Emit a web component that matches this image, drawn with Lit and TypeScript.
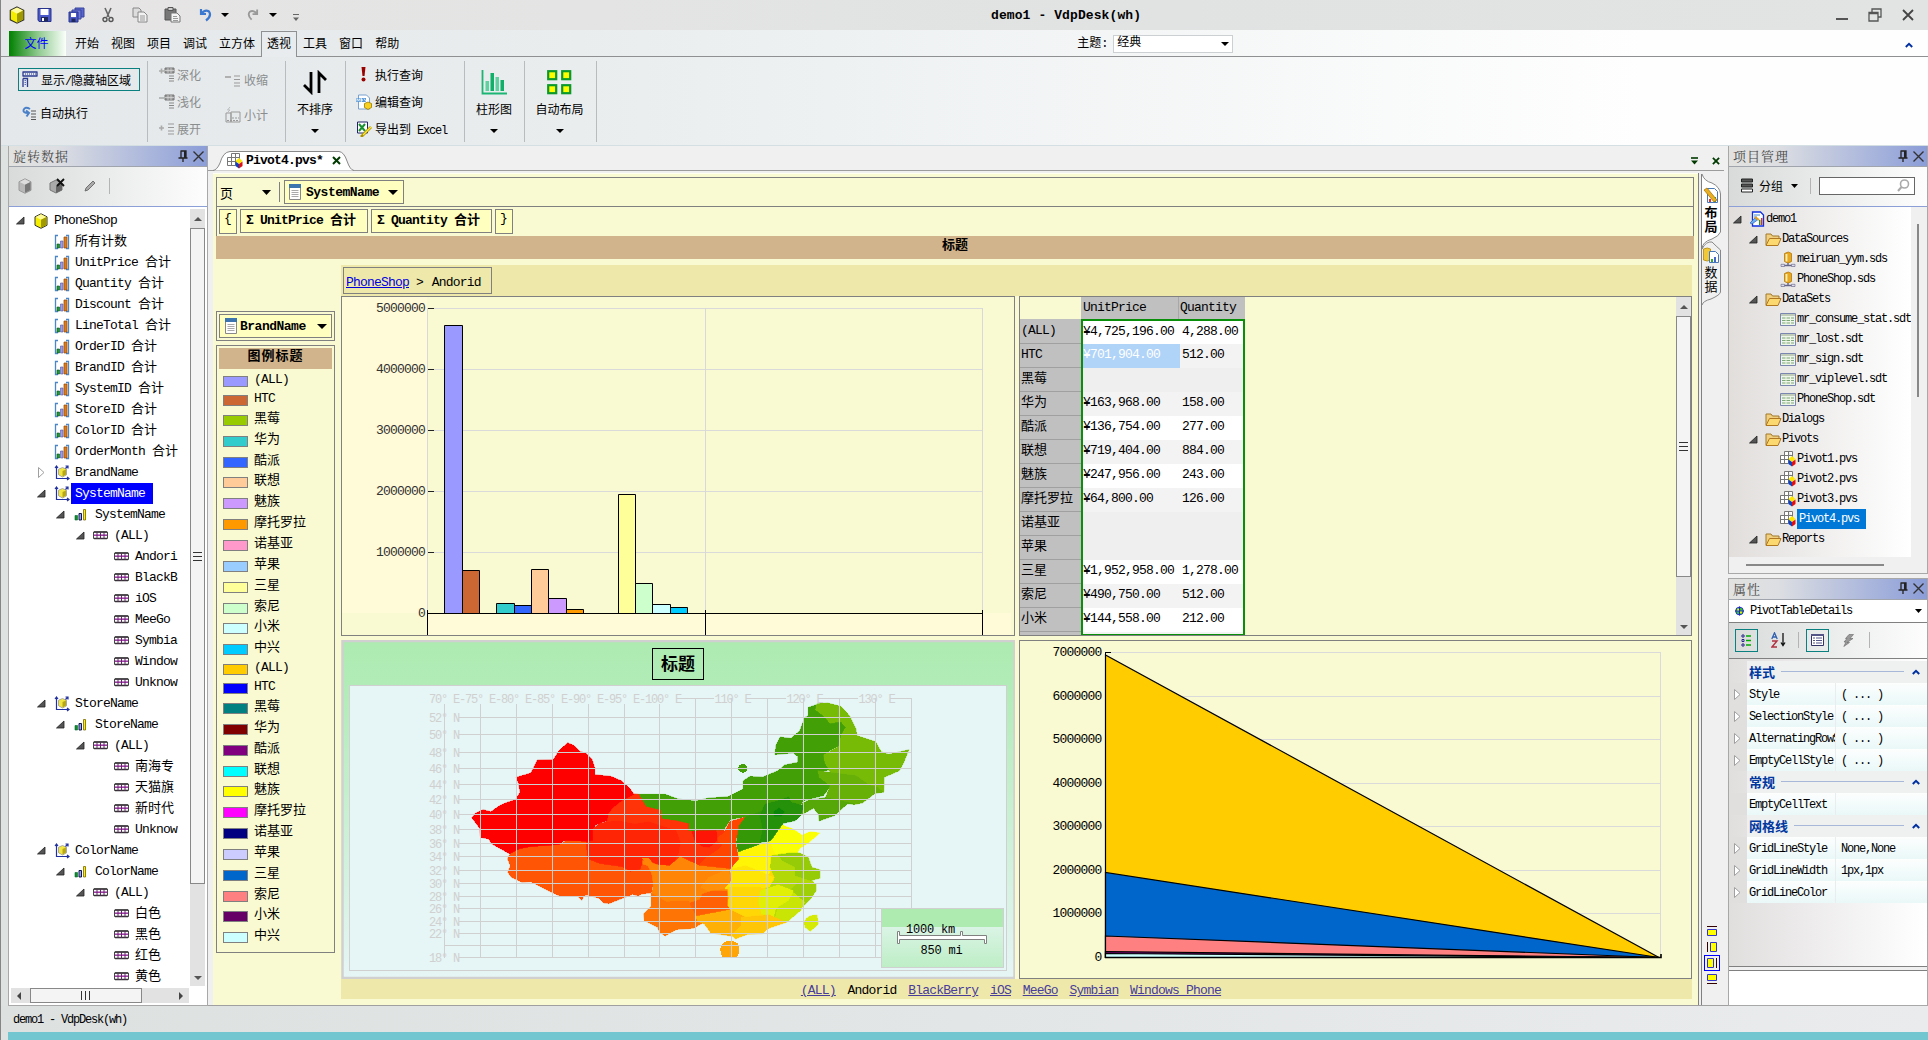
import { LitElement, html, svg, css, nothing } from "lit";
import { customElement } from "lit/decorators.js";
import { classMap } from "lit/directives/class-map.js";

/* Latin runs are tightened so that two Latin letters take one ideograph. */
const tx = (s: string) =>
  html`<span>${s.split(/([\x20-\x7e¥Σ°]+)/).filter((p) => p).map((p) =>
    /^[\x20-\x7e¥Σ°]/.test(p) ? html`<span class="l">${p}</span>` : p)}</span>`;

const base = css`
  :host { display: block; box-sizing: border-box; }
  *, *::before, *::after { box-sizing: border-box; }
  .l { letter-spacing: -0.1em; white-space: pre; }
  .f13 .l { letter-spacing: -0.0615em; }
  .b { font-weight: bold; }
  svg { display: block; flex: none; }
  .row { display: flex; align-items: center; }
  .sp { flex: 1; }
  .phead { height: 21px; display: flex; align-items: center; padding: 0 2px 0 4px; border-bottom: 1px solid #a0a4ac;
    background: linear-gradient(90deg, #e2e2e0 0%, #dcdee2 25%, #8b9dd8 100%); color: #444; }
  .phead .t { font: 13px/20px "Noto Serif CJK SC", "Liberation Serif", "Noto Sans CJK SC", serif; letter-spacing: 1px; color: #4a4a4a; flex: 1; }
  .ptool { height: 40px; display: flex; align-items: center; border-bottom: 1px solid #8c9fd6; padding-bottom: 2px;
    background: linear-gradient(90deg, #d8dbda, #fdfdfd); }
  .vsep { width: 1px; height: 16px; background: #b4b4b4; }
`;

const tri = (w = 8, h = 4, c = "#000") => html`<svg width=${w} height=${h} viewBox="0 0 8 4" preserveAspectRatio="none"><path d="M0 0h8L4 4z" fill=${c} /></svg>`;
const open = html`<svg width="9" height="9" viewBox="0 0 9 9"><path d="M8 1v7H.5z" fill="#555" stroke="#222" stroke-width=".8" /></svg>`;
const closed = html`<svg width="9" height="13" viewBox="0 0 9 13"><path d="M1.500 1.500v10l5.500-5z" fill="#fff" stroke="#a0a0a0" /></svg>`;
const pin = html`<svg width="12" height="13" viewBox="0 0 12 13"><path d="M3.500 1h5.500v6.500M4 1v6.500M1.500 8h9M6 8v4" fill="none" stroke="#222" stroke-width="1.300" /><path d="M7 1h2v7H7z" fill="#222" /></svg>`;
const cross = html`<svg width="13" height="13" viewBox="0 0 13 13"><path d="M1.500 1.500l10 10M11.500 1.500l-10 10" stroke="#333" stroke-width="1.400" /></svg>`;
const cube = (w = 16, top = "#fffb9a", l = "#f5ee00", r = "#a09a00", s = "#333") => html`<svg width=${w} height=${w} viewBox="0 0 16 16">
  <path d="M8 .8l6 3v8.500l-6 3-6-3V3.800z" fill=${l} stroke=${s} /><path d="M8 1.300l5.300 2.600L8 6.800 2.700 3.900z" fill=${top} /><path d="M8 6.800l5.500-2.900v8.100L8 14.800z" fill=${r} /></svg>`;
const measure = html`<svg width="16" height="16" viewBox="0 0 16 16"><path d="M4 1.500H1.500v13H4M12 1.500h2.500v13H12" fill="none" stroke="#4a86c8" stroke-width="1.300" />
  <path d="M3 10h2.500v4H3z" fill="#18a030" stroke="#085018" stroke-width=".6" /><path d="M6.500 7H9v7H6.500z" fill="#9a9af0" stroke="#5050a0" stroke-width=".6" /><path d="M10 3h3v11h-3z" fill="#e07c18" stroke="#904808" stroke-width=".7" /></svg>`;
const dimension = html`<svg width="16" height="16" viewBox="0 0 16 16"><path d="M2.500 1v12.500H15M1 3l1.500-2L4 3M13 12l2 1.500-2 1.500M11 4l3-3m-2.500 0H14v2.500" fill="none" stroke="#2030a0" stroke-width="1.200" />
  <path d="M8.500 2.500l4 1.800v5.500L8.500 12 4.500 9.700v-5.500z" fill="#f2e640" stroke="#999" stroke-width=".8" /><path d="M8.500 6v5.500L12 9.500V4.500z" fill="#b8a818" /></svg>`;
const level = html`<svg width="13" height="13" viewBox="0 0 13 13"><path d="M1 7.500h2.500V12H1z" fill="#109020" stroke="#063" stroke-width=".6" /><path d="M5 5.500h2.500V12H5z" fill="#8fa0ff" stroke="#003" stroke-width=".9" /><path d="M9.500 1.500h2V12h-2z" fill="#ffee00" stroke="#776600" stroke-width=".8" /></svg>`;
const member = html`<svg width="15" height="9" viewBox="0 0 15 9"><path d="M.5 1h14v6.500H.5z" fill="#fff" stroke="#444" /><path d="M1 1h13M1 7.500h13" stroke="#333" stroke-width="1.600" /><path d="M1 4.200h13" stroke="#a030a8" stroke-width="1.500" /><path d="M4 1v7M7.500 1v7M11 1v7" stroke="#5a2a60" /></svg>`;
const pivotIc = html`<svg width="16" height="16" viewBox="0 0 16 16"><path d="M4.500 .5h8v8h-8zM.5 4.500h8v8h-8zM8.500 .5v4h4M4.500 4.500v8M.5 8.500h8" fill="#fff" stroke="#777" />
  <path d="M12 5l3.500 3L12 11 8.500 8z" fill="#ffe800" /><path d="M8.500 8.500L12 11v4.500l-3.500-2.500z" fill="#1040c0" /><path d="M15.500 8.500L12 11v4.500l3.500-2.500z" fill="#e01010" /></svg>`;
const folder = html`<svg width="17" height="15" viewBox="0 0 17 15"><path d="M1 13V2h5l1.500 2H14v3" fill="#f0d080" stroke="#a07828" /><path d="M1 13.500L4.500 6.500H16L13 13.500z" fill="#fbd870" stroke="#b07820" /></svg>`;
const dsIc = html`<svg width="16" height="16" viewBox="0 0 16 16"><path d="M4.500 2.500q4-3 7 0v8q-3.500 3-7 0z" fill="#e8a820" stroke="#b07810" stroke-width=".8" /><path d="M6.500 3v7.500" stroke="#fff0b0" stroke-width="1.800" /><path d="M8 12v2M1 14.500h14" stroke="#668" stroke-width="1.400" /><path d="M1 13.300h3.500v2.200H1zM11.500 13.300H15v2.200h-3.500z" fill="#dde" stroke="#668" stroke-width=".6" /></svg>`;
const sdtIc = html`<svg width="16" height="13" viewBox="0 0 16 13"><path d="M.5.5h15v12H.5z" fill="#eef6ea" stroke="#7a86b0" /><path d="M1 2h14" stroke="#c0ccb8" stroke-width="2" /><path d="M2 5h3.500M6.500 5H10M11 5h3M2 7.500h3.500M6.500 7.500H10M11 7.500h3M2 10h3.500M6.500 10H10M11 10h3" stroke="#7ea878" /></svg>`;
const projIc = html`<svg width="16" height="16" viewBox="0 0 16 16"><path d="M3.500 1h8l3 3v11h-11z" fill="#fff" stroke="#1030e0" stroke-width="1.300" /><path d="M5 4h6M5 6h3" stroke="#48c" /><path d="M10 9h1.500v5H10z" fill="#1a9a30" /><path d="M12 7h1.500v7H12z" fill="#e03020" /><path d="M1 12l5-5 2.500 2L3 13z" fill="#6ab0f0" stroke="#3060c0" stroke-width=".7" /><path d="M6 6l4 3" stroke="#e8a010" stroke-width="2" /></svg>`;
const listIc = html`<svg width="12" height="16" viewBox="0 0 12 16"><path d="M.5.5h11v15H.5z" fill="#fff" stroke="#888" /><path d="M0 0h12v4H0z" fill="#3c74b0" /><path d="M2.500 6.500h7M2.500 8.500h7M2.500 10.500h7M2.500 12.500h7" stroke="#aaa" /></svg>`;

@customElement("ribbon-bar")
class RibbonBar extends LitElement {
  static styles = [base, css`
    :host { height: 146px; background: linear-gradient(90deg, #e4e8ea 0%, #e9edee 30%, #fefefe 85%); border-bottom: 1px solid #d4dfe4; }
    .title { height: 30px; background: linear-gradient(90deg, #e7e5e5, #e0e3e2 60%, #e2e4e4); padding: 0 9px 0 7px; display: grid; grid-template-columns: 983px 1fr auto; align-items: center; }
    .title .name { font-size: 13px; color: #000; }
    .title .name .l { letter-spacing: 0.1px; font-weight: bold; }
    .quick { display: flex; align-items: center; }
    .winb { display: flex; justify-content: flex-end; align-items: center; gap: 20px; padding-right: 5px; }
    .tabs { height: 27px; padding-left: 8px; display: flex; border-bottom: 1px solid #8e9092; line-height: 30px; }
    .file { width: 57px; margin-top: 1px; color: #00f; text-align: center; background: linear-gradient(90deg, #008000, #8cc88c 50%, #fafffa); line-height: 28px; padding-right: 2px; }
    .tab { padding: 0 6px; margin-left: 0; }
    .tab.first { margin-left: 3px; }
    .tab.on { border: 1px solid #8e9092; border-bottom: 0; margin-top: 1px; height: 26px; padding: 0 5px; line-height: 27px; background: #e9ecee; }
    .theme { display: flex; align-items: center; margin-left: 672px; gap: 6px; margin-top: 1px; }
    .combo { width: 120px; height: 18px; background: #fff; border: 1px solid #ccd0d2; display: flex; align-items: center; justify-content: space-between; padding: 0 3px; line-height: 17px; }
    .chev { margin-left: auto; margin-right: 15px; align-self: center; margin-top: 3px; }
    .groups { display: flex; height: 88px; padding: 4px 0 4px 7px; }
    .g { border-right: 1px solid #b9bcbe; height: 81px; }
    .g1 { width: 140px; padding: 7px 8px 0 10px; }
    .toggle { border: 1px solid #0b8080; height: 23px; width: 122px; padding-left: 3px; gap: 3px; white-space: nowrap; }
    .plain { height: 22px; margin-top: 11px; padding-left: 4px; gap: 3px; }
    .g2 { width: 138px; display: flex; padding-left: 11px; color: #8a8d8e; }
    .col3 { width: 66px; }
    .col3 .row { height: 27px; gap: 2px; }
    .col2 { padding-top: 1px; }
    .col2 .row { height: 35px; gap: 3px; }
    .big { display: flex; flex-direction: column; align-items: center; padding-right: 1px; }
    .big svg.ic { margin-top: 9px; height: 25px; }
    .big .cap { margin: 8px 0 9px; line-height: 17px; }
    .g3 { width: 60px; } .g4 { width: 119px; padding-left: 10px; } .g5 { width: 60px; } .g6 { width: 72px; padding-right: 2px; }
    .g4 .row { height: 27px; gap: 3px; }
  `];
  render() {
    const grid3 = svg`<path d="M6 1h9v5H6z" fill="#999" stroke="#777"/><path d="M6 3.500h9M9 1v5M12 1v5" stroke="#ddd" stroke-width=".7"/><path d="M10 9h5M10 11.500h5M10 14h5" stroke="#888"/>`;
    const dots = svg`<path d="M9 3h6M9 6.500h6M9 10h6M9 13h6" stroke="#999"/>`;
    return html`
      <div class="title">
        <div class="quick">
          ${cube(18)}
          <svg width="15" height="16" viewBox="0 0 15 16" style="margin-left:11px"><path d="M1 1.500h13v13H2L1 13z" fill="#4a58c8" stroke="#28348c" /><path d="M3.500 2h8v6h-8z" fill="#fff" /><path d="M4 10h7v4.500H4z" fill="#20285c" /><path d="M5 11h2v3H5z" fill="#fff" /></svg>
          <svg width="17" height="16" viewBox="0 0 17 16" style="margin-left:16px"><path d="M7 1h9v9H7z" fill="#5a66cc" stroke="#38449c" /><path d="M4 3h9v9H4z" fill="#6f7ada" stroke="#38449c" /><path d="M1 5h9v10H1z" fill="#4a58c8" stroke="#28348c" /><path d="M3 6h5v4H3z" fill="#fff" /><path d="M3.500 11.500h4V15h-4z" fill="#20285c" /></svg>
          <svg width="12" height="16" viewBox="0 0 12 16" style="margin-left:17px"><path d="M3 1l4 9M9 1L5 10" stroke="#666" stroke-width="1.600" /><circle cx="3" cy="12.500" r="2" fill="none" stroke="#555" stroke-width="1.400" /><circle cx="9" cy="12.500" r="2" fill="none" stroke="#555" stroke-width="1.400" /></svg>
          <svg width="16" height="16" viewBox="0 0 16 16" style="margin-left:18px"><path d="M1 1h6l2 2v7H1z" fill="#ddd" stroke="#888" /><path d="M6 5h6l3 3v7H6z" fill="#f2f2f2" stroke="#888" /><path d="M8 9h5M8 11h5M8 13h5" stroke="#999" /></svg>
          <svg width="17" height="16" viewBox="0 0 17 16" style="margin-left:16px"><path d="M1 2h11v11H1z" fill="#777" stroke="#555" /><path d="M4 .5h5v3H4z" fill="#ccc" stroke="#555" /><path d="M7 6h6l3 3v6H7z" fill="#f4f4f4" stroke="#777" /><path d="M9 9.500h4M9 11.500h5M9 13.500h5" stroke="#999" /></svg>
          <svg width="13" height="14" viewBox="0 0 13 14" style="margin-left:18px"><path d="M2 1v5h5M2 6Q6 1 10 3.500 13 8 7 12.500" fill="none" stroke="#3b78d0" stroke-width="2.200" /></svg>
          <span style="margin-left:9px">${tri(8, 4)}</span>
          <svg width="12" height="14" viewBox="0 0 13 14" style="margin-left:18px"><path d="M11 1v5H6M11 6Q7 1 3 3.500 0 7 5 12" fill="none" stroke="#999" stroke-width="2" /></svg>
          <span style="margin-left:10px">${tri(8, 4)}</span>
          <svg width="8" height="9" viewBox="0 0 8 9" style="margin:4px 0 0 15px"><path d="M1 1.500h6" stroke="#666" /><path d="M1 4.500h6L4 8z" fill="#666" /></svg>
        </div>
        <div class="name">${tx("demo1 — VdpDesk(wh)".replace("—", "-"))}</div>
        <div class="winb">
          <svg width="12" height="14" viewBox="0 0 12 14"><path d="M0 11h12" stroke="#555" stroke-width="2" /></svg>
          <svg width="14" height="14" viewBox="0 0 14 14"><path d="M4 4V1h9v8h-3M1 4.500h9V13H1zM1 5.500h9" fill="none" stroke="#555" stroke-width="1.300" /></svg>
          <svg width="12" height="12" viewBox="0 0 12 12"><path d="M1 1l10 10M11 1L1 11" stroke="#444" stroke-width="1.800" /></svg>
        </div>
      </div>
      <div class="tabs">
        <div class="file">文件</div>
        ${["开始", "视图", "项目", "调试", "立方体", "透视", "工具", "窗口", "帮助"].map((t, i) => html`<div class=${classMap({ tab: true, first: i === 0, on: t === "透视" })}>${t}</div>`)}
        <div class="theme">${tx("主题:")}<div class="combo">经典${tri(8, 4)}</div></div>
        <svg class="chev" width="8" height="6" viewBox="0 0 8 6"><path d="M.8 5L4 1.800 7.200 5" fill="none" stroke="#0030a0" stroke-width="1.900" /></svg>
      </div>
      <div class="groups">
        <div class="g g1">
          <div class="row toggle"><svg width="16" height="17" viewBox="0 0 16 17"><path d="M.5 1h15M.5 5h15M1 1v4M15 1v4M1 7.500h4.500V16M1 7.500V16" fill="none" stroke="#2a3a90" stroke-width="1.300" /><path d="M3 3h11" stroke="#2a3a90" stroke-dasharray="1 1" /><path d="M3.200 9v6" stroke="#2a3a90" stroke-dasharray="1 1" /></svg>${tx("显示/隐藏轴区域")}</div>
          <div class="row plain"><svg width="15" height="14" viewBox="0 0 15 14"><path d="M8 3Q3 0 1.500 4 1 7 6 7M4 4.500L7 7 4.500 10.500" fill="none" stroke="#4a80c8" stroke-width="2" /><path d="M9 5h5M9 8h5M9 11h5M9 13.500h5" stroke="#555" stroke-width="1.200" /></svg>自动执行</div>
        </div>
        <div class="g g2">
          <div class="col3">
            <div class="row"><svg width="16" height="16" viewBox="0 0 16 16"><path d="M0 4h5M2.500 1.500v5" stroke="#aaa" stroke-width="1.600" />${grid3}</svg>深化</div>
            <div class="row"><svg width="16" height="16" viewBox="0 0 16 16"><path d="M0 4h5" stroke="#aaa" stroke-width="1.600" />${grid3}</svg>浅化</div>
            <div class="row"><svg width="16" height="16" viewBox="0 0 16 16"><path d="M0 7h5M2.500 4.500v5" stroke="#aaa" stroke-width="1.600" />${dots}</svg>展开</div>
          </div>
          <div class="col2">
            <div class="row"><svg width="16" height="16" viewBox="0 0 16 16"><path d="M0 5h6" stroke="#aaa" stroke-width="1.800" /><g transform="translate(0 1)">${dots}</g></svg>收缩</div>
            <div class="row"><svg width="16" height="16" viewBox="0 0 16 16"><path d="M1 6h5v9H1zM6 5h9v10H6z" fill="none" stroke="#999" /><path d="M2 13.500h12M7 11h7" stroke="#999" stroke-dasharray="2 1" /><path d="M5 0L2.500 3H5L2 6" fill="none" stroke="#bbb" /></svg>小计</div>
          </div>
        </div>
        <div class="g g3 big"><svg class="ic" width="26" height="25" viewBox="0 0 26 25"><path d="M9 2v20L2 15M17 23V3l7 7" fill="none" stroke="#000" stroke-width="2.800" /></svg><span class="cap">不排序</span>${tri(8, 4)}</div>
        <div class="g g4">
          <div class="row"><svg width="16" height="15" viewBox="0 0 16 15"><path d="M5.500 0h4L8.500 9h-2z" fill="#900" /><circle cx="7.500" cy="12.500" r="2" fill="#900" /></svg>执行查询</div>
          <div class="row"><svg width="16" height="16" viewBox="0 0 16 16"><path d="M2.500 1h8l3 3v11h-11z" fill="#fff" stroke="#78a0d0" /><path d="M0 4h10v4H0z" fill="#5a9ad8" /><path d="M1 7.500v-3l1.500 2L4 4.500v3M5.500 4.500v3q2-1 0-3M8 4.500l2 3" fill="none" stroke="#fff" stroke-width=".8" /><path d="M12 8l3.500 1.500v4L12 15.500 8.500 13.500v-4z" fill="#f8d020" stroke="#9a7a00" stroke-width=".8" /></svg>编辑查询</div>
          <div class="row"><svg width="16" height="16" viewBox="0 0 16 16"><path d="M1.500 1h10v11h-10z" fill="#fff" stroke="#226" /><path d="M3 3l6 7M9 3l-6 7" stroke="#1a9030" stroke-width="2" /><path d="M15 6L7 14l-2 2" stroke="#a89000" stroke-width="2.600" /><path d="M15 6L7 14" stroke="#ffe830" stroke-width="1.200" /></svg>${tx("导出到 Excel")}</div>
        </div>
        <div class="g g5 big"><svg class="ic" width="26" height="25" viewBox="0 0 26 25"><path d="M1.500 0v23.500H26" fill="none" stroke="#1db573" stroke-width="1.800" /><path d="M4.500 11h3.500v10H4.500zM14.500 7h3.500v14h-3.500z" fill="#5fd0a0" /><path d="M9.500 3h3.500v18H9.500zM19.500 10h3.500v11h-3.500z" fill="#10b068" /></svg><span class="cap">柱形图</span>${tri(8, 4)}</div>
        <div class="g g6 big"><svg class="ic" width="25" height="25" viewBox="0 0 25 25">${[[0, 0], [14, 0], [0, 14], [14, 14]].map(([x, y]) => svg`<rect x=${x + 1.200} y=${y + 1.200} width="8" height="8" fill="#ff0" stroke="#0a9a2a" stroke-width="2.200"/>`)}</svg><span class="cap">自动布局</span>${tri(8, 4)}</div>
      </div>`;
  }
}

type Node = [number, unknown, string, ("o" | "c" | "")?, boolean?];

@customElement("cube-panel")
class CubePanel extends LitElement {
  static styles = [base, css`
    :host { width: 200px; height: 860px; border: 1px solid #a8a8a8; border-top: 0; background: #fff; margin-bottom: 0; }
    .ptool { padding-left: 8px; gap: 16px; }
    .body { display: flex; height: 779px; }
    .tree { width: 181px; padding-top: 3px; font-size: 13px; line-height: 20px; overflow: hidden; }
    .n { height: 21px; display: flex; align-items: center; position: relative; }
    .arr { width: 13px; flex: none; display: flex; justify-content: flex-start; }
    .ic { width: 21px; flex: none; display: flex; align-items: center; }
    .n.top .ic { width: 17px; }
    .lbl { padding: 0 0 0 4px; margin-left: -4px; white-space: nowrap; height: 21px; line-height: 22px; }
    .n.top .lbl { margin-left: 0; }
    .sel { background: #00f; color: #fff; padding-right: 8px; }
    .vs { width: 15px; margin-top: 2px; height: 777px; background: #e2e2e2; display: flex; flex-direction: column; align-items: center; }
    .up { height: 19px; display: flex; align-items: center; }
    .th { width: 15px; height: 656px; background: #f4f4f4; border: 1px solid #888; display: flex; align-items: center; justify-content: center; }
    .dn { flex: 1; display: flex; align-items: flex-end; padding-bottom: 6px; }
    .hs { width: 178px; margin: 2px 0 0 2px; height: 15px; background: #e2e2e2; display: flex; align-items: center; justify-content: space-between; padding: 0 6px; }
    .hs .th2 { width: 112px; height: 15px; background: #f4f4f4; border: 1px solid #888; display: flex; align-items: center; justify-content: center; margin-right: 27px; margin-left: -2px; }
  `];
  nodes: Node[] = [
    [0, cube(16), "PhoneShop", "o"],
    ...["所有计数", "UnitPrice 合计", "Quantity 合计", "Discount 合计", "LineTotal 合计", "OrderID 合计", "BrandID 合计", "SystemID 合计", "StoreID 合计", "ColorID 合计", "OrderMonth 合计"].map((s) => [1, measure, s] as Node),
    [1, dimension, "BrandName", "c"],
    [1, dimension, "SystemName", "o", true], [2, level, "SystemName", "o"], [3, member, "(ALL)", "o"],
    ...["Andori", "BlackB", "iOS", "MeeGo", "Symbia", "Window", "Unknow"].map((s) => [4, member, s] as Node),
    [1, dimension, "StoreName", "o"], [2, level, "StoreName", "o"], [3, member, "(ALL)", "o"],
    ...["南海专", "天猫旗", "新时代", "Unknow"].map((s) => [4, member, s] as Node),
    [1, dimension, "ColorName", "o"], [2, level, "ColorName", "o"], [3, member, "(ALL)", "o"],
    ...["白色", "黑色", "红色", "黄色"].map((s) => [4, member, s] as Node),
  ];
  render() {
    return html`
      <div class="phead"><span class="t">旋转数据</span>${pin}<span style="width:3px"></span>${cross}</div>
      <div class="ptool">${cube(16, "#ddd", "#b8b8b8", "#777", "#999")}
        <svg width="16" height="16" viewBox="0 0 16 16"><path d="M7 2l6 3v7l-6 3-6-3V5z" fill="#aaa" stroke="#777" /><path d="M7 8l6-3v7l-6 3z" fill="#666" /><path d="M8 1l7 7M15 1L8 8" stroke="#111" stroke-width="1.900" /></svg>
        <svg width="12" height="12" viewBox="0 0 12 12" style="margin-left:3px"><path d="M1 11l1-3 7-7 2 2-7 7z" fill="#aaa" stroke="#666" stroke-width=".9" /></svg>
        <span class="vsep" style="margin-left:-3px"></span></div>
      <div class="body">
        <div class="tree f13">
          ${this.nodes.map(([d, ic, t, a, s]) => html`<div class=${classMap({ n: true, top: d === 0 })} style="padding-left:${[7, 28, 47, 67, 88][d]}px">
            <span class="arr" style="width:${[17, 17, 18, 17, 17][d]}px">${a === "o" ? open : a === "c" ? closed : nothing}</span><span class="ic">${ic}</span>
            <span class=${classMap({ lbl: true, sel: !!s })}>${tx(t)}</span></div>`)}
        </div>
        <div class="vs"><div class="up"><svg width="8" height="4" viewBox="0 0 8 4"><path d="M0 4h8L4 0z" fill="#555" /></svg></div>
          <div class="th"><svg width="9" height="9" viewBox="0 0 9 9"><path d="M0 .5h9M0 4.500h9M0 8.500h9" stroke="#333" /></svg></div>
          <div class="dn">${tri(8, 4, "#555")}</div></div>
      </div>
      <div class="hs"><svg width="4" height="8" viewBox="0 0 4 8"><path d="M4 0v8L0 4z" fill="#444" /></svg>
        <div class="th2"><svg width="9" height="9" viewBox="0 0 9 9"><path d="M.5 0v9M4.500 0v9M8.500 0v9" stroke="#333" /></svg></div>
        <svg width="4" height="8" viewBox="0 0 4 8"><path d="M0 0v8l4-4z" fill="#444" /></svg></div>`;
  }
}

const legend: [string, string][] = [
  ["(ALL)", "#9999ff"], ["HTC", "#cc6633"], ["黑莓", "#99cc00"], ["华为", "#33cccc"], ["酷派", "#3366ff"], ["联想", "#ffcc99"], ["魅族", "#cc99ff"], ["摩托罗拉", "#ff9900"],
  ["诺基亚", "#ff99cc"], ["苹果", "#99ccff"], ["三星", "#ffff99"], ["索尼", "#ccffcc"], ["小米", "#ccffff"], ["中兴", "#00ccff"],
  ["(ALL)", "#ffcc00"], ["HTC", "#0000ff"], ["黑莓", "#008080"], ["华为", "#800000"], ["酷派", "#800080"], ["联想", "#00ffff"], ["魅族", "#ffff00"], ["摩托罗拉", "#ff00ff"],
  ["诺基亚", "#000080"], ["苹果", "#ccccff"], ["三星", "#0066cc"], ["索尼", "#ff8080"], ["小米", "#660066"], ["中兴", "#ccffff"],
];
const rows: [string, string, string, string][] = [
  ["(ALL)", "¥4,725,196.00", "4,288.00", "w"], ["HTC", "¥701,904.00", "512.00", "a"], ["黑莓", "", "", "e"], ["华为", "¥163,968.00", "158.00", "a"],
  ["酷派", "¥136,754.00", "277.00", "w"], ["联想", "¥719,404.00", "884.00", "a"], ["魅族", "¥247,956.00", "243.00", "w"], ["摩托罗拉", "¥64,800.00", "126.00", "a"],
  ["诺基亚", "", "", "e"], ["苹果", "", "", "e"], ["三星", "¥1,952,958.00", "1,278.00", "w"], ["索尼", "¥490,750.00", "512.00", "a"], ["小米", "¥144,558.00", "212.00", "w"],
];
/* Columns: left, right, top, fill. */
const bars: [number, number, number, string][] = [
  [444.5, 462.5, 325.5, "#9999ff"], [462.5, 479.5, 570.5, "#cc6633"], [496.5, 514.5, 603.5, "#33cccc"], [514.5, 531.5, 605.5, "#3366ff"], [531.5, 548.5, 569.5, "#ffcc99"],
  [548.5, 566.5, 598.5, "#cc99ff"], [566.5, 583.5, 609.5, "#ff9900"], [618.5, 635.5, 494.5, "#ffff99"], [635.5, 652.5, 583.5, "#ccffcc"], [652.5, 670.5, 604.5, "#ccffff"], [670.5, 687.5, 607.5, "#00ccff"],
];
/* The first three shapes lie under the provinces and close the seams between them. */
const provinces: [string, string][] = [
  ["#ff8507", "690,680 780,675 850,700 915,712 915,845 835,880 800,815 752,820 720,795 722,760 700,712"],
  ["#ffd707", "905,715 1000,690 1010,760 985,800 1010,865 975,912 905,920 860,885 893,840"],
  ["#b2d807", "995,680 1030,674 1078,685 1088,715 1100,725 1088,752 1096,768 1085,808 1055,845 1025,878 985,862 980,780 1005,750"],
  ["#ff3307", "678,494 690,496 700,515 706,532 740,543 742,568 775,574 805,583 805,605 885,603 900,640 880,680 860,715 828,710 785,685 760,715 600,660 580,600 616,575 618,555 630,535 650,515"],
  ["#ff0000", "304,566 312,553 330,542 348,548 368,530 385,520 405,512 415,490 412,464 406,445 440,432 455,393 492,392 505,365 525,341 540,350 553,367 568,373 581,390 587,415 587,437 625,442 650,456 668,478 678,496 650,515 630,535 618,555 616,575 590,588 583,600 584,636 565,642 515,636 505,648 440,654 415,660 392,675 350,645 343,630 324,625 322,598"],
  ["#ff2505", "583,600 600,582 640,575 680,585 712,578 740,590 775,605 785,640 780,675 765,710 735,708 715,695 697,690 697,706 692,722 670,728 650,714 600,705 570,690 567,640 584,634"],
  ["#ff5505", "392,675 415,660 440,654 505,648 520,636 567,638 570,690 600,705 650,714 670,728 692,722 697,706 710,712 718,735 722,765 718,792 695,795 688,801 675,796 620,824 608,822 598,808 570,798 562,800 558,814 548,802 505,800 480,785 440,758 420,760 395,745 387,730 393,710 386,690"],
  ["#ff4500", "936,563 920,600 912,640 920,690 900,720 840,714 828,708 845,685 872,662 882,648 866,630 885,612 898,578"],
  ["#ff1505", "812,610 820,585 840,577 862,585 868,605 870,635 852,655 835,652 818,635"],
  ["#42a006", "690,496 750,496 780,510 820,516 850,507 895,503 930,480 930,455 945,442 975,444 1010,425 1025,408 1055,400 1055,382 1045,372 1003,377 1005,350 1015,324 1040,328 1060,305 1072,265 1080,260 1080,235 1110,222 1150,270 1168,295 1155,320 1152,350 1120,372 1118,400 1135,420 1108,430 1132,470 1115,500 1070,515 1060,530 1035,520 980,560 968,570 936,563 900,572 885,603 805,605 805,583 775,574 742,568 740,543 706,532"],
  ["#77bb07", "1100,224 1125,222 1155,232 1175,260 1190,300 1192,320 1235,338 1248,368 1265,376 1312,362 1300,400 1290,425 1255,445 1254,488 1225,495 1190,460 1130,430 1118,400 1115,378 1150,352 1155,320 1166,295 1155,278 1130,283 1116,262 1096,242"],
  ["#66b007", "1105,445 1102,425 1140,432 1190,440 1220,468 1240,475 1254,490 1235,492 1205,522 1185,527 1150,514 1120,505 1130,470"],
  ["#55a807", "1170,525 1140,560 1105,576 1103,555 1092,538 1060,560 1065,524 1080,514 1120,505 1150,514 1185,524"],
  ["#359907", "936,563 975,545 985,600 970,645 918,672 914,640 920,590"],
  ["#259009", "968,560 980,525 1010,515 1035,503 1040,520 1070,530 1062,560 1050,575 1022,583 1010,615 995,637 968,640 975,600"],
  ["#0b8507", "1000,548 1012,537 1025,548 1018,562 1002,562"],
  ["#faff05", "1000,625 1020,588 1045,600 1065,618 1085,608 1107,612 1080,642 1060,658 1055,674 1000,686 985,650"],
  ["#fff505", "918,670 990,638 1005,680 1000,700 990,735 900,730 908,710 920,690"],
  ["#ffe505", "900,720 935,710 970,728 1000,745 990,775 940,778 888,780 888,765 902,755"],
  ["#b2d807", "995,680 1020,674 1050,715 1045,750 1060,768 1020,778 1000,770 1002,745 992,715"],
  ["#95cc07", "1010,678 1035,672 1060,672 1080,685 1088,715 1107,722 1107,748 1085,755 1050,740 1050,715 1020,695"],
  ["#9fd007", "1055,762 1098,765 1098,785 1085,810 1070,830 1045,800 1040,780"],
  ["#ff8507", "697,688 712,688 725,708 760,710 785,683 828,710 900,720 885,740 848,750 835,785 812,815 790,820 752,818 722,790 722,740 712,710"],
  ["#ff9007", "850,745 895,720 902,755 885,780 850,787 832,775"],
  ["#ff6005", "803,823 830,812 835,795 860,785 893,787 893,830 902,845 820,864"],
  ["#ff7505", "718,792 752,818 803,815 812,840 825,870 837,882 815,898 775,902 750,921 737,910 732,895 702,875 700,855 718,830"],
  ["#ffd707", "893,775 970,775 985,800 970,860 925,862 900,845"],
  ["#e0ef05", "970,785 1010,767 1045,785 1040,815 1005,840 1000,865 972,855 965,820"],
  ["#c8e505", "1045,790 1072,820 1062,845 1030,880 1003,865 1010,835 1035,815"],
  ["#ffb007", "820,862 900,842 935,865 930,890 905,922 855,912 840,885 825,878"],
  ["#ffc507", "925,865 990,858 1030,880 985,900 975,914 940,916 912,930 902,918 925,890"],
  ["#d5ea05", "1070,880 1075,868 1085,860 1100,858 1103,885 1085,907 1072,895"],
];
const lats: [number, number][] = [[52, 718.5], [50, 735.5], [48, 753.5], [46, 769.5], [44, 785.5], [42, 800.5], [40, 815.5], [38, 830.5], [36, 844.5], [34, 857.5], [32, 871.5], [30, 884.5], [28, 897.5], [26, 909.5], [24, 922.5], [22, 934.5], [20, 946.5], [18, 958.5]];
const lons = [444.5, 480.5, 516.5, 552.5, 588.5, 624.5, 659.5, 695.5, 731.5, 767.5, 803.5, 839.5, 875.5, 911.5];

@customElement("pivot-document")
class PivotDocument extends LitElement {
  static styles = [base, css`
    :host { flex: 1; height: 860px; background: #f0f0f0; border-bottom: 1px solid #a0a0a0; font-size: 13px; }
    .tabrow { height: 27px; display: flex; justify-content: space-between; background: linear-gradient(#f0f0f0 24px, #9c9c9c 24px, #9c9c9c 25px, #f0f0f0 25px); margin-right: 4px; }
    .doctab { width: 145px; height: 25px; margin-left: 5px; display: grid; }
    .doctab > * { grid-area: 1 / 1; }
    .doctab .in { display: flex; align-items: center; padding: 4px 0 0 14px; gap: 3px; }
    .corner { display: flex; align-items: center; gap: 14px; padding: 2px 4px 0 0; }
    .main { display: flex; height: 832px; }
    .doc { margin-left: 5px; width: 1485px; background: #f9f9d2; border-top: 1px solid #fffff0; padding: 3px 3px 0 3px; }
    .top { border: 1px solid #808080; border-bottom: 0; height: 59px; width: 1478px; }
    .r1 { height: 29px; border-bottom: 1px solid #808080; display: flex; align-items: center; }
    .r2 { display: flex; padding: 2px 2px 0; gap: 3px; }
    .fld { background: #ffffc0; border: 1px solid #808080; height: 24px; display: flex; align-items: center; padding: 0 5px; gap: 5px; line-height: 23px; white-space: nowrap; }
    .r2 .fld { line-height: 24px; }
    .r2 .br { height: 25px; width: 18px; padding: 0; justify-content: center; line-height: 17px; align-items: flex-start; }
    .tan { background: #d2b48c; height: 23px; width: 1478px; text-align: center; font-weight: bold; line-height: 19px; }
    .work { display: flex; gap: 6px; }
    .left { width: 119px; padding-top: 52px; }
    .brandbox { border: 1px solid #808080; height: 30px; padding: 2px; }
    .brandbox .b { letter-spacing: 0; }
    .name .l { letter-spacing: -0.5px; }
    .legend { border: 1px solid #808080; margin-top: 4px; height: 608px; padding: 2px; }
    .lh { background: #d2b48c; height: 21px; text-align: center; font-weight: bold; line-height: 17px; letter-spacing: 1px; margin-bottom: 2px; }
    .li { display: flex; height: 20.85px; align-items: center; padding-left: 4px; gap: 6px; line-height: 18px; }
    .li > span { margin-top: -1px; }
    .li.lat { height: 19px; }
    .li i { width: 25px; height: 11px; border: 1px solid #808080; margin-top: 2px; }
    .right { width: 1351px; padding-top: 6px; }
    .kh { background: #eee8aa; height: 31px; padding: 2px; }
    .crumb { border: 1px solid #808080; width: 149px; height: 27px; padding-left: 2px; line-height: 29px; white-space: nowrap; }
    .crumb a { color: #0000e0; text-decoration: underline; }
    .grid { display: grid; grid-template-columns: 674px 673px; grid-template-rows: 340px 339px; gap: 4px; }
    .box { border: 1px solid #808080; display: flex; overflow: hidden; }
    .box.map { border: 0; }
    .links { background: #eee8aa; height: 20px; display: flex; justify-content: center; gap: 11.700px; padding-right: 11px; line-height: 24px; color: #000; }
    .links a { color: #483d9b; text-decoration: underline; }
    svg text { font-family: "Liberation Mono", "Noto Sans CJK SC", monospace; font-size: 13px; letter-spacing: -0.8px; white-space: pre; }
    svg .m { font-size: 12px; letter-spacing: -1.200px; fill: #d0d0d0; }
    svg .sm { font-size: 12px; letter-spacing: -0.200px; }
    svg .ti { font-size: 17px; font-weight: bold; letter-spacing: 0; }
    .table { width: 225px; display: grid; grid-template-columns: 61px 164px; grid-template-rows: 22px 316px; }
    .ch { display: flex; background: #c0c0c0; line-height: 22px; }
    .ch span.c1 { width: 98px; border-right: 1px solid #a8a8a8; padding-left: 2px; }
    .ch span.c2 { padding-left: 1px; }
    .rh { background: #c0c0c0; height: 316px; padding-top: 1px; overflow: hidden; }
    .rh div { height: 24px; border-bottom: 1px solid #a0a0a0; padding-left: 1px; line-height: 22px; white-space: nowrap; }
    .data { border: 2px solid #0a8f0a; height: 317px; overflow: hidden; background: #f3f3f3; }
    .dr { display: flex; height: 24px; line-height: 22px; background: #fff; }
    .dr.first { height: 23px; }
    .dr.a { background: #f3f3f3; } .dr.e { background: #efefef; }
    .dr span.c1 { width: 97px; padding-left: 0; } .dr span.c2 { padding-left: 2px; }
    .dr .on { background: #b0d3f8; color: #fff; }
    .vs { margin-left: auto; width: 15px; background: #e2e2e2; display: flex; flex-direction: column; align-items: center; }
    .vs .up { height: 19px; display: flex; align-items: center; }
    .vs .th { width: 15px; height: 261px; background: #f4f4f4; border: 1px solid #888; display: flex; align-items: center; justify-content: center; }
    .vs .dn { flex: 1; display: flex; align-items: flex-end; padding-bottom: 6px; }
    .strip { width: 30px; border-left: 1px solid #808080; background: #f0f0f0; }
  `];
  barChart() {
    return svg`
      <rect x="342" y="297" width="85" height="316" fill="#fffad7"/><rect x="427" y="613" width="584" height="22" fill="#fffad7"/>
      ${[0, 1, 2, 3, 4, 5].map((v) => { const y = 613.5 - v * 61; return svg`<path d=${`M427 ${y}H983`} stroke="#dadada"/><path d=${`M428 ${y}h6`} stroke="#222"/><text x="425" y=${y + 3.500} text-anchor="end" fill="#333">${v ? v + "000000" : "0"}</text>`; })}
      <path d="M427.500 308V613M705.500 308V613M982.500 308V613" stroke="#d8d8d8"/>
      ${bars.map(([a, b, t, c]) => svg`<path d=${`M${a} 613.500V${t}H${b}V613.500z`} fill=${c} stroke="#000"/>`)}
      <path d="M427 613.500H983M427.500 610V636M705.500 610V636M982.500 610V636" stroke="#000"/>`;
  }
  map() {
    return svg`
      <defs><linearGradient id="g" x1="0" y1="0" x2="0" y2="1"><stop offset="0" stop-color="#adebb1"/><stop offset=".15" stop-color="#b2ecb8"/><stop offset="1" stop-color="#e6f5f5"/></linearGradient>
      <linearGradient id="k" x1="0" y1="0" x2="0" y2="1"><stop offset="0" stop-color="#e8f6f4"/><stop offset="1" stop-color="#bdeec5"/></linearGradient></defs>
      <rect x="342.500" y="642" width="672" height="337" fill="url(#g)" stroke="#d0d0d0" stroke-width="2.500"/>
      <rect x="349.500" y="686.500" width="657" height="285" fill="#e6f5f5" stroke="#d0d0d0"/>
      <rect x="652.500" y="649.500" width="51" height="31" fill="none" stroke="#000"/>
      <text class="ti" x="678" y="670.500" text-anchor="middle">标题</text>
      <g transform="translate(340 630) scale(.43367 .33333)" stroke-linejoin="round" shape-rendering="crispEdges">
        ${provinces.map(([c, p]) => svg`<polygon points=${p} fill=${c} stroke=${c} stroke-width="1"/>`)}
        <ellipse cx="929" cy="418" rx="11" ry="13" fill="#42a006"/><path d="M882 984Q870 955 885 940 902 930 917 943 926 965 915 984z" fill="#ffa507"/>
      </g>
      ${lats.map(([d, y]) => svg`<path d=${`M${d === 20 ? 444 : 459} ${y}H912`} stroke="#d0d0d0"/>${d === 20 ? nothing : svg`<text class="m" x="429" y=${y + 4.500}>${d}° N</text>`}`)}
      ${lons.map((x) => svg`<path d=${`M${x} ${x < 695 ? 705 : 699}V959`} stroke="#d0d0d0"/>`)}
      <path d="M678 699.500H714M750 699.500H786M822 699.500H858M893 699.500H912" stroke="#d0d0d0"/>
      <text class="m" x="429" y="704">70° E-75° E-80° E-85° E-90° E-95° E-100° E</text>
      <text class="m" x="714.500" y="704">110° E</text><text class="m" x="786.500" y="704">120° E</text><text class="m" x="858.500" y="704">130° E</text>
      <rect x="881.500" y="909.500" width="122" height="59" fill="url(#k)" stroke="#d0d0d0"/><rect x="882" y="910" width="121" height="18" fill="#adebb1"/>
      <text class="sm" x="906" y="933.500">1000 km</text><text class="sm" x="920.500" y="954.500">850 mi</text>
      <path d="M897.500 932.500h2v4h61v-4h2v4h24v8h-2v-4h-85v4h-2z" fill="#fff" stroke="#808080"/>`;
  }
  areaChart() {
    const ys = [957.5, 913.5, 870.5, 826.5, 783.5, 739.5, 696.5, 652.5];
    const areas: [number, string][] = [[655, "#ffcc00"], [872.5, "#0066cc"], [936, "#ff8080"], [951.500, "#660066"], [953.500, "#ccffff"]];
    return svg`
      ${ys.map((y, v) => svg`<path d=${`M1106 ${y}H1661`} stroke="#dadada"/><text x="1101.500" y=${y + 3.500} text-anchor="end">${v ? v + "000000" : "0"}</text>`)}
      <path d="M1660.500 653V957" stroke="#dadada"/><path d="M1105.500 652.500V957.500M1105 652.500H1111" fill="none" stroke="#000"/>
      ${areas.map(([y, c]) => svg`<path d=${`M1105.500 957.500V${y}L1659 957.500z`} fill=${c} stroke="#000" stroke-width="1.200"/>`)}
      <path d="M1105 957.500H1661V954" fill="none" stroke="#000" stroke-width="1.600"/>`;
  }
  strip() {
    return svg`
      <path d="M1701.500 174V1005" stroke="#808080"/>
      <path d="M1702 174Q1704 181 1712 183 1720 187 1720.500 194V232Q1720 235 1712 239L1702 247z" fill="#fff"/><path d="M1702 174Q1704 181 1712 183 1720 187 1720.500 194V232Q1719 236 1712 239 1702 242 1702 249M1702 249Q1706 241 1712 242 1716 246 1720.500 250V292Q1720 295 1711 299 1703 301 1702 305" fill="none" stroke="#888"/>
      <path d="M1707.500 188.500h7l3 3v11h-10z" fill="#fff" stroke="#4878b8"/><path d="M1709 199h2v3h-2z" fill="#d33"/><path d="M1714 197h2v5h-2z" fill="#3a3"/><path d="M1704 190l3-2 10 12-3 2z" fill="#e8b020" stroke="#a06a00" stroke-width=".7"/>
      <path d="M1703.500 249q4-2 7 0v11q-3 2-7 0z" fill="#f0c838" stroke="#b08810" stroke-width=".8"/><path d="M1709.500 251.500h6l3 3v8h-9z" fill="#fff" stroke="#4878b8"/><path d="M1711 259h2v3h-2z" fill="#3a3"/><path d="M1714 257h2v5h-2z" fill="#46c"/>
      <g text-anchor="middle"><text x="1710.500" y="217" font-weight="bold">布</text><text x="1710.500" y="231" font-weight="bold">局</text><text x="1710.500" y="277">数</text><text x="1710.500" y="291">据</text></g>
      <g fill="#ff0" stroke="#3434c8"><path d="M1707.500 929.500h9v6h-9zM1710.500 942.500h6v9h-6zM1707.500 958.500h6v9h-6zM1707.500 974.500h9v6h-9z"/></g>
      <path d="M1707 926.500h10M1707.500 942v10M1716.500 958v10M1707 983.500h10" stroke="#300"/><rect x="1704.500" y="955.500" width="15" height="15" fill="none" stroke="#00f"/>`;
  }
  render() {
    return html`
      <div class="tabrow">
        <div class="doctab f13"><svg width="145" height="25" viewBox="0 0 145 25"><path d="M0 24.500Q4 24 7 17 10 6 17 5.500H126Q131 6 134 15 137 24 141 24.500z" fill="#fff" /><path d="M0 24.500Q4 24 7 17 10 6 17 5.500H126Q131 6 134 15 137 24 141 24.500" fill="none" stroke="#888" /></svg>
          <div class="in"><span>${pivotIc}</span><span class="b" style="width:83px">${tx("Pivot4.pvs*")}</span><svg width="9" height="9" viewBox="0 0 9 9"><path d="M1 1l7 7M8 1L1 8" stroke="#013a01" stroke-width="2" /></svg></div></div>
        <div class="corner"><svg width="7" height="8" viewBox="0 0 7 8"><path d="M0 1h7" stroke="#013a01" stroke-width="1.600" /><path d="M0 3.500h7L3.500 7.500z" fill="#013a01" /></svg><svg width="8" height="8" viewBox="0 0 9 9"><path d="M1 1l7 7M8 1L1 8" stroke="#013a01" stroke-width="2" /></svg></div>
      </div>
      <div class="main f13">
        <div class="doc">
          <div class="top">
            <div class="r1"><span style="padding:0 29px 0 3px">页</span>${tri(9, 5)}<span style="width:8px"></span><span class="vsep" style="height:20px;background:#808080"></span><span style="width:4px"></span>
              <div class="fld b name" style="width:120px;padding-left:4px">${listIc}<span style="margin-right:4px">${tx("SystemName")}</span>${tri(10, 5)}</div></div>
            <div class="r2"><div class="fld br">{</div><div class="fld b" style="width:128px">${tx("Σ UnitPrice 合计")}</div><div class="fld b" style="width:121px">${tx("Σ Quantity 合计")}</div><div class="fld br">}</div></div>
          </div>
          <div class="tan">标题</div>
          <div class="work">
            <div class="left">
              <div class="brandbox"><div class="fld b name" style="gap:3px">${listIc}<span>${tx("BrandName")}</span><span style="margin-left:8px">${tri(10, 5)}</span></div></div>
              <div class="legend"><div class="lh">图例标题</div>
                ${legend.map(([n, c]) => html`<div class=${classMap({ li: true, lat: /[A-Z]/.test(n) })}><i style="background:${c}"></i>${tx(n)}</div>`)}</div>
            </div>
            <div class="right">
              <div class="kh"><div class="crumb"><a>${tx("PhoneShop")}</a><span style="padding:0 8px 0 7px">&gt;</span>${tx("Andorid")}</div></div>
              <div class="grid">
                <div class="box"><svg width="672" height="338" viewBox="342 297 672 338">${this.barChart()}</svg></div>
                <div class="box">
                  <div class="table"><span></span><div class="ch"><span class="c1">${tx("UnitPrice")}</span><span class="c2">${tx("Quantity")}</span></div>
                    <div class="rh">${rows.map((r) => html`<div>${tx(r[0])}</div>`)}</div>
                    <div class="data">${rows.map((r, i) => html`<div class=${classMap({ dr: true, first: i === 0, [r[3]]: true })}><span class=${classMap({ c1: true, on: i === 1 })}>${tx(r[1])}</span><span class="c2">${tx(r[2])}</span></div>`)}</div></div>
                  <div class="vs"><div class="up"><svg width="8" height="4" viewBox="0 0 8 4"><path d="M0 4h8L4 0z" fill="#555" /></svg></div>
                    <div class="th"><svg width="9" height="9" viewBox="0 0 9 9"><path d="M0 .5h9M0 4.500h9M0 8.500h9" stroke="#333" /></svg></div><div class="dn">${tri(8, 4, "#555")}</div></div>
                </div>
                <div class="box map"><svg width="674" height="339" viewBox="341 641 674 339">${this.map()}</svg></div>
                <div class="box"><svg width="671" height="337" viewBox="1020 641 671 337">${this.areaChart()}</svg></div>
              </div>
              <div class="links">${["(ALL)", "Andorid", "BlackBerry", "iOS", "MeeGo", "Symbian", "Windows Phone"].map((s, i) => i === 1 ? html`<span>${tx(s)}</span>` : html`<a>${tx(s)}</a>`)}</div>
            </div>
          </div>
        </div>
        <div class="strip"><svg width="29" height="832" viewBox="1699 173 29 832">${this.strip()}</svg></div>
      </div>`;
  }
}

@customElement("project-panel")
class ProjectPanel extends LitElement {
  static styles = [base, css`
    :host { height: 428px; border: 1px solid #a8a8a8; border-top: 0; background: #f0f0f0; }
    .ptool { padding-left: 12px; }
    .search { width: 96px; height: 18px; border: 1px solid #666; background: #fff; display: flex; justify-content: flex-end; align-items: center; padding-right: 4px; }
    .mid { display: flex; height: 350px; }
    .tree { width: 182px; padding-top: 2px; background: linear-gradient(90deg, #e1dedc, #fff); overflow: hidden; line-height: 20px; }
    .n { height: 20px; display: flex; align-items: center; white-space: nowrap; }
    .arr { width: 16px; flex: none; } .ic { flex: none; width: 18px; }
    .sel { background: #0078d7; color: #fff; padding: 0 7px 0 2px; }
    .v { width: 2px; height: 173px; background: #888; margin: 17px 0 0 6px; }
    .h { width: 138px; height: 2px; background: #888; margin: 7px 0 0 17px; }
  `];
  nodes: Node[] = [
    [0, projIc, "demo1", "o"], [1, folder, "DataSources", "o"], [2, dsIc, "meiruan_yym.sds"], [2, dsIc, "PhoneShop.sds"], [1, folder, "DataSets", "o"],
    [2, sdtIc, "mr_consume_stat.sdt"], [2, sdtIc, "mr_lost.sdt"], [2, sdtIc, "mr_sign.sdt"], [2, sdtIc, "mr_viplevel.sdt"], [2, sdtIc, "PhoneShop.sdt"],
    [1, folder, "Dialogs"], [1, folder, "Pivots", "o"], [2, pivotIc, "Pivot1.pvs"], [2, pivotIc, "Pivot2.pvs"], [2, pivotIc, "Pivot3.pvs"], [2, pivotIc, "Pivot4.pvs", "", true], [1, folder, "Reports", "o"],
  ];
  render() {
    return html`
      <div class="phead"><span class="t">项目管理</span>${pin}<span style="width:3px"></span>${cross}</div>
      <div class="ptool"><svg width="12" height="15" viewBox="0 0 12 15"><path d="M.5 1h11v3H.5zM.5 6h11v3H.5z" fill="#555" stroke="#222" /><path d="M.5 11h11v3H.5z" fill="#fff" stroke="#222" /></svg>
        <span style="padding:0 8px 0 6px">分组</span>${tri(7, 4)}<span class="vsep" style="margin:0 8px 0 12px"></span>
        <div class="search"><svg width="13" height="13" viewBox="0 0 13 13"><circle cx="7.500" cy="5" r="4" fill="none" stroke="#aaa" stroke-width="1.600" /><path d="M4.500 8L1 12" stroke="#aaa" stroke-width="2" /></svg></div></div>
      <div class="mid"><div class="tree">
        ${this.nodes.map(([d, ic, t, a, s]) => html`<div class="n" style="padding-left:${[4, 20, 35][d]}px"><span class="arr">${a === "o" ? open : nothing}</span><span class="ic" style="width:17px">${ic}</span><span class=${classMap({ sel: !!s })}>${tx(t)}</span></div>`)}
      </div><div class="v"></div></div>
      <div class="h"></div>`;
  }
}

@customElement("property-panel")
class PropertyPanel extends LitElement {
  static styles = [base, css`
    :host { height: 429px; margin-top: 4px; border: 1px solid #a8a8a8; background: #fff; }
    .obj { height: 23px; padding: 1px 5px 0 6px; gap: 6px; border-bottom: 1px solid #808080; background: #fff; }
    .ptool { height: 36px; padding-left: 6px; padding-bottom: 0; border-color: #808080; }
    .tg { border: 1px solid #0b8080; width: 23px; height: 23px; display: grid; place-items: center; }
    .area { height: 308px; background: linear-gradient(90deg, #e1dede, #fff); border-bottom: 1px solid #808080; padding-top: 2px; }
    .cat, .pr { height: 22px; display: flex; margin-left: 18px; align-items: center; }
    .cat { background: #eff0f0; padding: 0 7px 0 2px; color: #0038a0; font-weight: bold; font-size: 13px; gap: 6px; }
    .cat i { flex: 1; height: 1px; background: #a8b8d8; margin-right: 2px; }
    .pr { background: linear-gradient(#fdfefe, #eaf8f8); margin-left: 0; }
    .gut { width: 18px; height: 22px; background: #e1dede; padding: 5px 0 0 4px; flex: none; }
    .nm { width: 89px; height: 22px; line-height: 25px; border-right: 1px solid #e8eeee; padding-left: 2px; overflow: hidden; flex: none; }
    .vl { padding-left: 5px; line-height: 25px; height: 22px; }
    .bot { height: 4px; background: #f0f0f0; border-bottom: 1px solid #808080; }
  `];
  item(n: string, v = "", ex = true) {
    return html`<div class="pr"><span class="gut">${ex ? closed : nothing}</span><span class="nm">${tx(n)}</span><span class="vl">${tx(v)}</span></div>`;
  }
  cat(n: string) {
    return html`<div class="cat">${n}<i></i><svg width="8" height="6" viewBox="0 0 8 6"><path d="M.8 5L4 1.800 7.200 5" fill="none" stroke="#0030a0" stroke-width="2" /></svg></div>`;
  }
  render() {
    return html`
      <div class="phead"><span class="t">属性</span>${pin}<span style="width:3px"></span>${cross}</div>
      <div class="row obj"><svg width="9" height="10" viewBox="0 0 10 10"><circle cx="5" cy="5" r="4.300" fill="#3c3" stroke="#22c" /><path d="M5 0v10M0 5h10" stroke="#22c" stroke-width="1.300" /><path d="M2.500 2.500h2v2h-2zM5.600 5.600h2v2h-2z" fill="#fe0" /></svg><span class="sp">${tx("PivotTableDetails")}</span>${tri(7, 4)}</div>
      <div class="ptool">
        <span class="tg"><svg width="11" height="13" viewBox="0 0 11 13"><path d="M1 1h2v2H1zM1 5.500h2v2H1zM1 10h2v2H1z" fill="#fff" stroke="#228" /><path d="M5 2h5M5 6.500h5M5 11h5" stroke="#0a0" stroke-width="1.300" /></svg></span>
        <svg width="15" height="16" viewBox="0 0 15 16" style="margin:0 12px 0 13px"><path d="M.8 7L3.500.8 6.200 7M1.800 5h3.500" fill="none" stroke="#3060b0" stroke-width="1.300" /><path d="M1 9h5L1 15h5" fill="none" stroke="#b03040" stroke-width="1.400" /><path d="M12 1v12M10 10.500l2 3 2-3" fill="none" stroke="#111" stroke-width="1.300" /></svg>
        <span class="vsep"></span><span class="tg" style="margin-left:7px"><svg width="13" height="12" viewBox="0 0 13 12"><path d="M.5.500h12v11H.5z" fill="#fff" stroke="#336" /><path d="M0 1h13" stroke="#558" stroke-width="2" /><path d="M2 4h2M5 4h6M2 6.500h2M5 6.500h6M2 9h2M5 9h6" stroke="#558" /></svg></span>
        <svg width="11" height="13" viewBox="0 0 11 13" style="margin:0 15px 0 14px"><path d="M6 .5h4.500L7 4.500h3L4 8.500h2.500L.8 12.500 3 8H1l3-3.500H2.500z" fill="#999" stroke="#666" stroke-width=".6" /></svg><span class="vsep"></span>
      </div>
      <div class="area">
        ${this.cat("样式")}${this.item("Style", "( ... )")}${this.item("SelectionStyle", "( ... )")}${this.item("AlternatingRowStyle", "( ... )")}${this.item("EmptyCellStyle", "( ... )")}
        ${this.cat("常规")}${this.item("EmptyCellText", "", false)}
        ${this.cat("网格线")}${this.item("GridLineStyle", "None,None")}${this.item("GridLineWidth", "1px,1px")}${this.item("GridLineColor")}
      </div><div class="bot"></div>`;
  }
}

@customElement("app-root")
class AppRoot extends LitElement {
  static styles = [base, css`
    :host { width: 1928px; height: 1040px; overflow: hidden; color: #000; background: #dee2e1; border-left: 1px solid #858585;
      font-family: "Liberation Mono", "Noto Sans CJK SC", monospace; font-size: 12px; }
    .mid { display: flex; height: 860px; padding-left: 7px; }
    .side { width: 200px; display: flex; flex-direction: column; background: #f0f0f0; }
    .status { height: 26px; padding: 0 0 0 12px; line-height: 28px; background: linear-gradient(90deg, #dde1e0, #e9ebec); }
    .edge { height: 8px; margin-left: 7px; background: #72c6cf; }
  `];
  render() {
    return html`<ribbon-bar></ribbon-bar>
      <div class="mid"><cube-panel></cube-panel><pivot-document></pivot-document><div class="side"><project-panel></project-panel><property-panel></property-panel></div></div>
      <div class="status">${tx("demo1 - VdpDesk(wh)")}</div><div class="edge"></div>`;
  }
}
